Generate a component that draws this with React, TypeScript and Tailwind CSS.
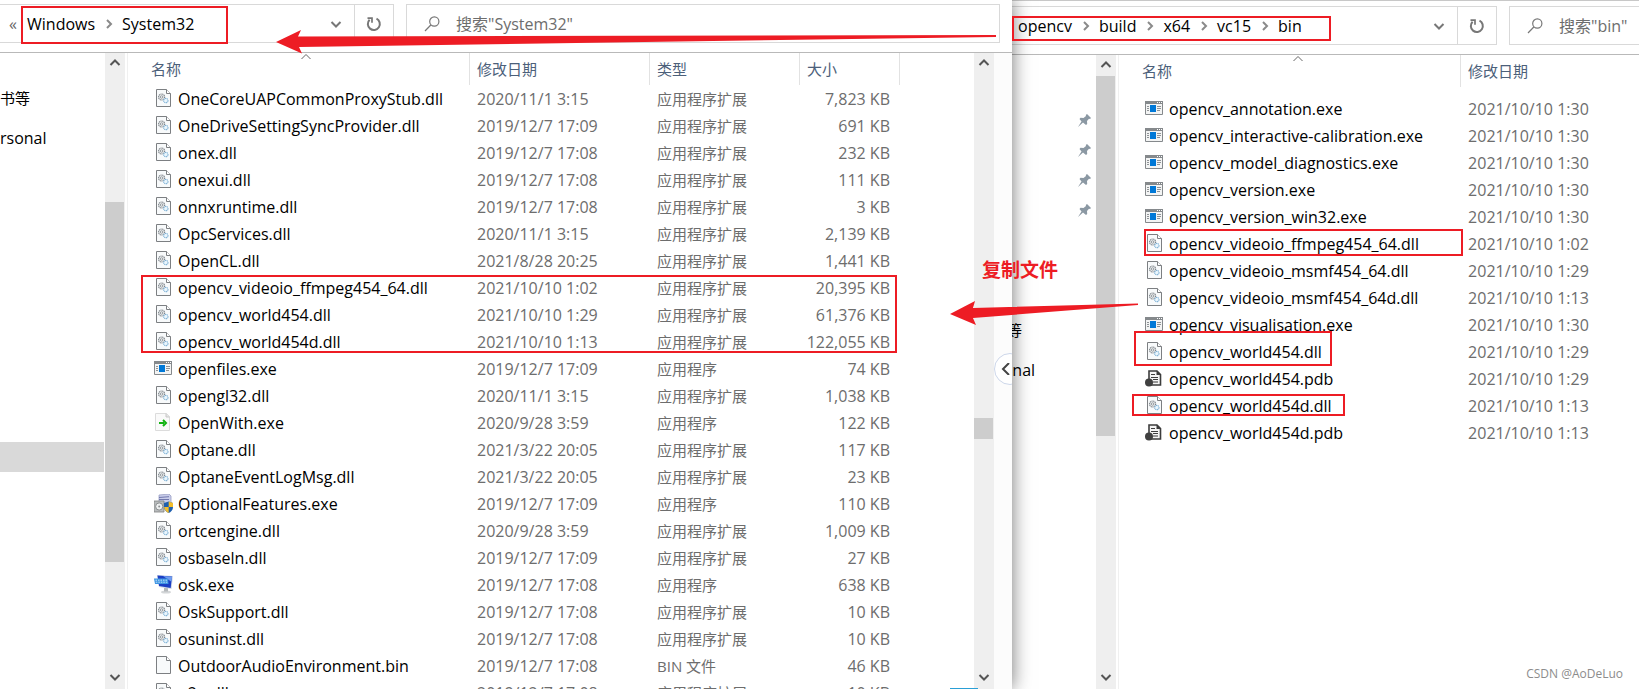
import * as React from "react";
import clsx from "clsx";

type FileKind = 'dll' | 'exe' | 'with' | 'features' | 'osk' | 'pdb' | 'file'
type FileRow = { name: string, date: string, type?: string, size?: string, kind: FileKind }

const EXT = '应用程序扩展'
const APP = '应用程序'

const systemFiles: FileRow[] = [
    {name: 'OneCoreUAPCommonProxyStub.dll', date: '2020/11/1 3:15', type: EXT, size: '7,823 KB', kind: 'dll'},
    {name: 'OneDriveSettingSyncProvider.dll', date: '2019/12/7 17:09', type: EXT, size: '691 KB', kind: 'dll'},
    {name: 'onex.dll', date: '2019/12/7 17:08', type: EXT, size: '232 KB', kind: 'dll'},
    {name: 'onexui.dll', date: '2019/12/7 17:08', type: EXT, size: '111 KB', kind: 'dll'},
    {name: 'onnxruntime.dll', date: '2019/12/7 17:08', type: EXT, size: '3 KB', kind: 'dll'},
    {name: 'OpcServices.dll', date: '2020/11/1 3:15', type: EXT, size: '2,139 KB', kind: 'dll'},
    {name: 'OpenCL.dll', date: '2021/8/28 20:25', type: EXT, size: '1,441 KB', kind: 'dll'},
    {name: 'opencv_videoio_ffmpeg454_64.dll', date: '2021/10/10 1:02', type: EXT, size: '20,395 KB', kind: 'dll'},
    {name: 'opencv_world454.dll', date: '2021/10/10 1:29', type: EXT, size: '61,376 KB', kind: 'dll'},
    {name: 'opencv_world454d.dll', date: '2021/10/10 1:13', type: EXT, size: '122,055 KB', kind: 'dll'},
    {name: 'openfiles.exe', date: '2019/12/7 17:09', type: APP, size: '74 KB', kind: 'exe'},
    {name: 'opengl32.dll', date: '2020/11/1 3:15', type: EXT, size: '1,038 KB', kind: 'dll'},
    {name: 'OpenWith.exe', date: '2020/9/28 3:59', type: APP, size: '122 KB', kind: 'with'},
    {name: 'Optane.dll', date: '2021/3/22 20:05', type: EXT, size: '117 KB', kind: 'dll'},
    {name: 'OptaneEventLogMsg.dll', date: '2021/3/22 20:05', type: EXT, size: '23 KB', kind: 'dll'},
    {name: 'OptionalFeatures.exe', date: '2019/12/7 17:09', type: APP, size: '110 KB', kind: 'features'},
    {name: 'ortcengine.dll', date: '2020/9/28 3:59', type: EXT, size: '1,009 KB', kind: 'dll'},
    {name: 'osbaseln.dll', date: '2019/12/7 17:09', type: EXT, size: '27 KB', kind: 'dll'},
    {name: 'osk.exe', date: '2019/12/7 17:08', type: APP, size: '638 KB', kind: 'osk'},
    {name: 'OskSupport.dll', date: '2019/12/7 17:08', type: EXT, size: '10 KB', kind: 'dll'},
    {name: 'osuninst.dll', date: '2019/12/7 17:08', type: EXT, size: '10 KB', kind: 'dll'},
    {name: 'OutdoorAudioEnvironment.bin', date: '2019/12/7 17:08', type: 'BIN 文件', size: '46 KB', kind: 'file'},
    {name: 'p2p.dll', date: '2019/12/7 17:08', type: EXT, size: '10 KB', kind: 'dll'},
]

const binFiles: FileRow[] = [
    {name: 'opencv_annotation.exe', date: '2021/10/10 1:30', kind: 'exe'},
    {name: 'opencv_interactive-calibration.exe', date: '2021/10/10 1:30', kind: 'exe'},
    {name: 'opencv_model_diagnostics.exe', date: '2021/10/10 1:30', kind: 'exe'},
    {name: 'opencv_version.exe', date: '2021/10/10 1:30', kind: 'exe'},
    {name: 'opencv_version_win32.exe', date: '2021/10/10 1:30', kind: 'exe'},
    {name: 'opencv_videoio_ffmpeg454_64.dll', date: '2021/10/10 1:02', kind: 'dll'},
    {name: 'opencv_videoio_msmf454_64.dll', date: '2021/10/10 1:29', kind: 'dll'},
    {name: 'opencv_videoio_msmf454_64d.dll', date: '2021/10/10 1:13', kind: 'dll'},
    {name: 'opencv_visualisation.exe', date: '2021/10/10 1:30', kind: 'exe'},
    {name: 'opencv_world454.dll', date: '2021/10/10 1:29', kind: 'dll'},
    {name: 'opencv_world454.pdb', date: '2021/10/10 1:29', kind: 'pdb'},
    {name: 'opencv_world454d.dll', date: '2021/10/10 1:13', kind: 'dll'},
    {name: 'opencv_world454d.pdb', date: '2021/10/10 1:13', kind: 'pdb'},
]

function Page({children}: { children?: React.ReactNode }) {
    return (
        <>
            <path d="M2.5 .5h10l4 4v13h-14z" fill="#f8fafb" stroke="#7c7f82"/>
            <path d="M12.5 .5v4h4" fill="#fff" stroke="#7c7f82"/>
            {children}
        </>
    )
}

function FileIcon({kind}: { kind: FileKind }) {
    return (
        <svg width="20" height="19" viewBox="0 0 20 19" className="shrink-0" aria-hidden="true">
            {kind === 'file' && <Page/>}
            {kind === 'dll' && (
                <Page>
                    <circle cx="7.6" cy="8" r="3" fill="#e8eaeb" stroke="#7e858b" strokeWidth="1.1" strokeDasharray="1.2 .6"/>
                    <circle cx="7.6" cy="8" r="1.2" fill="#fff" stroke="#7e858b" strokeWidth=".8"/>
                    <circle cx="11.8" cy="11.6" r="2.2" fill="#eaf5fc" stroke="#7fb2d6" strokeWidth="1.1" strokeDasharray="1.2 .5"/>
                </Page>
            )}
            {kind === 'exe' && (
                <>
                    <path d="M.5 2.5h17v13H.5z" fill="#f3f4f4" stroke="#85898c"/>
                    <path d="M0 2h18v3H0z" fill="#85898c"/>
                    <path d="M12 3h1v1h-1zM14 3h1v1h-1zM16 3h1v1h-1z" fill="#fff"/>
                    <path d="M5 6h6v7H5z" fill="#0078d7"/>
                    <path d="M2 7.5h2M2 9.5h2M2 11.5h2M12 7.5h4M12 9.5h4M12 11.5h3" stroke="#8f9396"/>
                </>
            )}
            {kind === 'with' && (
                <>
                    <path d="M1.5 .5h11l3 3v14h-14z" fill="#fafafa" stroke="#dcdcdc"/>
                    <path d="M12 .5v3.5h3.5" fill="#e4e4e4" stroke="#c8c8c8"/>
                    <path d="M5 10h5M9 7l3 3-3 3" fill="none" stroke="#12b312" strokeWidth="2"/>
                </>
            )}
            {kind === 'features' && (
                <>
                    <path d="M5 1l10-1 2 2v9H5z" fill="#c9cdea" stroke="#9a9fc4" strokeWidth=".8"/>
                    <path d="M5 3.5l10-.8M5 5.5h10" stroke="#7178ad"/>
                    <path d="M0 7h10v11H0z" fill="#b9bcbd" stroke="#7d8082" strokeWidth=".8"/>
                    <circle cx="5.2" cy="12.5" r="3.6" fill="#eef0f0" stroke="#8b8e90"/>
                    <circle cx="5.2" cy="12.5" r="1" fill="#8b8e90"/>
                    <path d="M10 9l4.7-1.5L19 9v4c0 3-2 5-4.3 6-2.3-1-4.7-3-4.7-6z" fill="#1f5fae"/>
                    <path d="M14.7 7.5L19 9v4h-4.3zM14.7 13v6c-2.3-1-4.2-3-4.6-6z" fill="#f3bd2b"/>
                </>
            )}
            {kind === 'osk' && (
                <>
                    <ellipse cx="12" cy="17" rx="5" ry="1.6" fill="#d3d6d8"/>
                    <path d="M10 13h4v3.5h-4z" fill="#b4b8bb"/>
                    <path d="M3 0l16 1-1.5 13L5 12z" fill="#cfd6e4"/>
                    <path d="M3.5 .5L18 1.500l-1.300 11.500L5 11z" fill="#1c3fc4"/>
                    <path d="M9 1l9 .7-.6 5z" fill="#6f9df0"/>
                    <path d="M0 3.500h14l.5 5.500H1z" fill="#3f95e2"/>
                    <path d="M1.5 5.200h12M1.800 7.200h12" stroke="#bfe0fa" strokeDasharray="1.5 1"/>
                </>
            )}
            {kind === 'pdb' && (
                <>
                    <path d="M4 2h8l3.5 3.5V16H4z" fill="#f5f5f5" stroke="#3d3d3d" strokeWidth="1.6"/>
                    <path d="M11.5 1.5V6H16z" fill="#3d3d3d"/>
                    <path d="M6 5.5h4M6 8.5h7M8 10.5h5M8 13h5" stroke="#3d3d3d" strokeWidth="1.2"/>
                    <circle cx="4" cy="13.5" r="4" fill="#404040"/>
                </>
            )}
        </svg>
    )
}

function Chevron({dir, className}: { dir: 'up' | 'down' | 'left' | 'right', className?: string }) {
    const paths = {
        up: 'M1.5 8L6 3.5 10.500 8',
        down: 'M1.500 4L6 8.500 10.500 4',
        left: 'M9 0L3 6l6 6',
        right: 'M4 2l4 4-4 4',
    }
    return (
        <svg width="12" height="12" viewBox="0 0 12 12" fill="none" stroke="currentColor" strokeWidth="2"
             className={clsx('shrink-0', className)} aria-hidden="true">
            <path d={paths[dir]}/>
        </svg>
    )
}

function Scrollbar({thumb}: { thumb: string }) {
    return (
        <div className="flex w-5 shrink-0 flex-col items-center bg-[#efefef]">
            <button type="button" aria-label="向上滚动" className="flex h-5 w-full items-center justify-center text-[#555]">
                <Chevron dir="up"/>
            </button>
            <div className="min-h-0 w-full flex-1">
                <div className={clsx('w-[19px] bg-[#cdcdcd]', thumb)}/>
            </div>
            <button type="button" aria-label="向下滚动" className="flex h-6 w-full items-center justify-center text-[#555]">
                <Chevron dir="down"/>
            </button>
        </div>
    )
}

function Toolbar({crumbs, more, placeholder, className, searchClass}:
                     { crumbs: string[], more?: boolean, placeholder: string, className: string, searchClass: string }) {
    return (
        <div className={clsx('flex shrink-0 border-b border-[#b9b9b9]', className)}>
            <nav className="flex min-w-0 flex-1 items-center border-y border-r border-[#d9d9d9]">
                {more && <span className="w-[18px] text-[#666]">«</span>}
                {crumbs.map((crumb, index) => (
                    <React.Fragment key={crumb}>
                        {index > 0 && <Chevron dir="right" className="ml-2 mr-[7px] text-[#8a8a8a]"/>}
                        <a href="#" className="text-black">{crumb}</a>
                    </React.Fragment>
                ))}
                <button type="button" aria-label="以前的位置" className="ml-auto mr-3 text-[#777]">
                    <Chevron dir="down"/>
                </button>
                <button type="button" aria-label="刷新"
                        className="flex h-full w-[39px] shrink-0 items-center justify-center border-l border-[#d9d9d9] text-[#777]">
                    <svg width="16" height="16" viewBox="0 0 16 16" fill="none" stroke="currentColor" strokeWidth="2">
                        <path d="M10.5 2.6A6 6 0 1 1 3.6 3.7"/>
                        <path d="M1.5 2.2H6v4.500" strokeWidth="1.7"/>
                    </svg>
                </button>
            </nav>
            <label className={clsx('flex shrink-0 items-center border border-[#d9d9d9]', searchClass)}>
                <svg width="16" height="16" viewBox="0 0 16 16" fill="none" stroke="#777" strokeWidth="1.2"
                     className="shrink-0" aria-hidden="true">
                    <circle cx="10.3" cy="5.5" r="4.6"/>
                    <path d="M6.8 9L1 15"/>
                </svg>
                <input type="text" aria-label={placeholder} placeholder={placeholder}
                       className="ml-4 w-full min-w-0 bg-transparent outline-none placeholder:text-[#6d6d6d]"/>
            </label>
        </div>
    )
}

function HeadCell({label, className}: { label: string, className?: string }) {
    return (
        <th scope="col" className={clsx('p-0 align-top text-[15px] font-normal text-[#4c607a]', className)}>
            <div className="flex h-8 items-center border-r border-[#e2e2e2]">{label}</div>
        </th>
    )
}

function FileTable({files, full}: { files: FileRow[], full?: boolean }) {
    return (
        <table className="w-full table-fixed border-collapse text-left">
            <colgroup>
                <col className="w-[342px]"/>
                <col className="w-[180px]"/>
                {full && <col className="w-[150px]"/>}
                {full && <col className="w-[100px]"/>}
                {full && <col/>}
            </colgroup>
            <thead>
            <tr className={full ? 'h-8' : 'h-10'}>
                <HeadCell label="名称" className="[&>div]:pl-[23px]"/>
                <HeadCell label="修改日期" className={full ? '[&>div]:pl-[7px]' : '[&>div]:border-r-0 [&>div]:pl-[7px]'}/>
                {full && <HeadCell label="类型" className="[&>div]:pl-[7px]"/>}
                {full && <HeadCell label="大小" className="[&>div]:pl-[7px]"/>}
                {full && <td/>}
            </tr>
            </thead>
            <tbody className="text-[#6d6d6d]">
            {files.map(file => (
                <tr key={file.name} className="h-[27px]">
                    <td className="p-0 pl-[26px]">
                        <div className="flex items-center gap-1 text-black">
                            <FileIcon kind={file.kind}/>
                            <span className="whitespace-nowrap">{file.name}</span>
                        </div>
                    </td>
                    <td className="whitespace-nowrap p-0 pl-[7px]">{file.date}</td>
                    {full && <td className="whitespace-nowrap p-0 pl-[7px] text-[15px]">{file.type}</td>}
                    {full && <td className="whitespace-nowrap p-0 pr-[10px] text-right">{file.size}</td>}
                    {full && <td/>}
                </tr>
            ))}
            </tbody>
        </table>
    )
}

function Pin() {
    return (
        <svg width="14" height="14" viewBox="0 0 14 14" fill="#8b98a3" aria-hidden="true">
            <path d="M9 1l4 4-1 1-1-.3L9 8l.2 3L8 12 5 9.500 0 14l3.500-5.500L1.500 6l1-1.200 3 .2L8 3l-.200-1z"/>
        </svg>
    )
}

function MarkBox({className}: { className: string }) {
    return <div className={clsx('absolute border-2 border-[#ed1c24]', className)}/>
}

export default function App() {
    return (
        <div
            className="relative flex h-screen overflow-hidden bg-white font-['Open_Sans','Noto_Sans_CJK_SC',sans-serif] text-[16px] leading-5">
            <section className="relative z-10 flex w-[61.75%] shrink-0 flex-col bg-white shadow-[0_0_18px_rgba(0,0,0,0.55)]">
                <Toolbar crumbs={['Windows', 'System32']} more placeholder={'搜索"System32"'}
                         className="h-[53px] pt-1 pb-[9px] pr-3 [&>nav]:max-w-[394px] [&>nav]:pl-[9px]"
                         searchClass="ml-3 flex-1 pl-[17px]"/>
                <div className="flex min-h-0 flex-1">
                    <aside className="w-[105px] shrink-0">
                        <div className="mt-[35px] h-5 text-[15px]">书等</div>
                        <div className="mt-5 h-5">rsonal</div>
                        <div className="mt-[294px] h-[30px] w-[104px] bg-[#d9d9d9]"/>
                    </aside>
                    <Scrollbar thumb="mt-[129px] h-[360px]"/>
                    <div className="relative ml-0.5 min-w-0 flex-1 overflow-hidden border-l border-[#f0f0f0]">
                        <FileTable files={systemFiles} full/>
                        <Chevron dir="up" className="absolute left-[172px] -top-0.5 text-[#666] [&>path]:stroke-1"/>
                    </div>
                    <Scrollbar thumb="mt-[345px] h-[21px]"/>
                    <div className="relative w-[18px] shrink-0 overflow-hidden bg-[#fcfcfc]">
                        <button type="button" aria-label="展开预览"
                                className="absolute left-0 top-[300px] flex size-8 items-center rounded-full border border-[#cdd7ea] bg-white pl-[5px] text-[#444]">
                            <Chevron dir="left"/>
                        </button>
                    </div>
                </div>
            </section>

            <section className="flex min-w-0 flex-1 flex-col border-t border-[#c8c8c8]">
                <Toolbar crumbs={['opencv', 'build', 'x64', 'vc15', 'bin']} placeholder={'搜索"bin"'}
                         className="h-[54px] pt-[5px] pb-[9px] [&>nav]:pl-[6px]"
                         searchClass="ml-3 w-[130px] border-r-0 pl-[17px]"/>
                <div className="flex min-h-0 flex-1">
                    <aside className="flex w-[84px] shrink-0 flex-col overflow-hidden">
                        <div className="mt-[58px] flex flex-col items-end gap-4 pr-1">
                            <Pin/>
                            <Pin/>
                            <Pin/>
                            <Pin/>
                        </div>
                        <div className="mt-[103px] flex h-5 w-[10px] justify-end whitespace-nowrap text-[15px]">等</div>
                        <div className="mt-5 flex h-5 w-[23px] justify-end">onal</div>
                    </aside>
                    <Scrollbar thumb="mt-px h-[360px]"/>
                    <div className="relative ml-0.5 min-w-0 flex-1 overflow-hidden border-l border-[#f0f0f0]">
                        <FileTable files={binFiles}/>
                        <Chevron dir="up" className="absolute left-[173px] -top-0.5 text-[#666] [&>path]:stroke-1"/>
                    </div>
                </div>
            </section>

            {/* marks over both windows */}
            <div className="pointer-events-none absolute inset-0 z-20">
                <MarkBox className="left-[21px] top-[6px] h-[38px] w-[207px]"/>
                <MarkBox className="left-[141px] top-[275px] h-[78px] w-[756px]"/>
                <MarkBox className="left-[1012px] top-[16px] h-[25px] w-[319px]"/>
                <MarkBox className="left-[1144px] top-[229px] h-[27px] w-[319px]"/>
                <MarkBox className="left-[1134px] top-[331px] h-[35px] w-[198px]"/>
                <MarkBox className="left-[1132px] top-[394px] h-[22px] w-[213px]"/>
                <svg width="1639" height="689" className="absolute left-0 top-0" fill="#ed1c24" aria-hidden="true">
                    <path d="M276 42l25-12-3 6.500L996 35v2L299 47l3 6.500z"/>
                    <path d="M950 314l25-13-2 7 165-4.500v1.500L973 318l3 7z"/>
                </svg>
                <p className="absolute left-[982px] top-[260px] text-[19px] font-bold text-[#ed1c24]">复制文件</p>
                <div className="absolute bottom-0 left-[950px] h-px w-7 bg-[#2a9fd6]"/>
                <p className="absolute bottom-[5px] right-4 text-[12px] text-[#8c8c8c]">CSDN @AoDeLuo</p>
            </div>
        </div>
    )
}
